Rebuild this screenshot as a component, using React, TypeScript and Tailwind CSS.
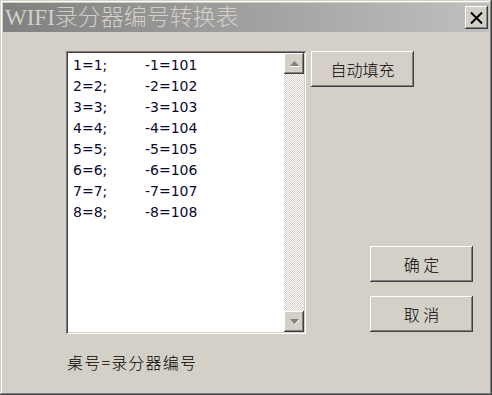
import React from 'react';

const pairs = [1, 2, 3, 4, 5, 6, 7, 8];

// classic raised 3D border for buttons
const raised =
  'shadow-[inset_-1px_-1px_0_#404040,inset_1px_1px_0_#ffffff,inset_-2px_-2px_0_#808080,inset_2px_2px_0_#d4d0c8]';

const cjk = "font-['Noto_Sans_CJK_SC',sans-serif]";

const Btn: React.FC<{ label: string; className?: string }> = ({ label, className = '' }) => (
  <button
    className={`w-[103px] h-[36px] bg-[#d4d0c8] ${raised} ${cjk} font-light text-[16px] text-black flex items-center justify-center ${className}`}
  >
    {label}
  </button>
);

const ArrowBtn: React.FC<{ up?: boolean }> = ({ up }) => (
  <div className={`w-[20px] h-[21px] bg-[#d4d0c8] ${raised} flex items-center justify-center`}>
    <svg width="11" height="7" viewBox="0 0 11 7">
      {up ? (
        <>
          <polygon points="1,6 10,6 5.5,1" fill="#808080" />
          <line x1="1.5" y1="6.5" x2="10.5" y2="6.5" stroke="#ffffff" strokeWidth="1" />
        </>
      ) : (
        <>
          <polygon points="1,1 10,1 5.5,6" fill="#808080" />
          <line x1="6" y1="6.5" x2="10.5" y2="1.5" stroke="#ffffff" strokeWidth="1" />
        </>
      )}
    </svg>
  </div>
);

const App: React.FC = () => {
  return (
    <div className="w-[492px] h-[395px] bg-[#d4d0c8] p-[3px] flex flex-col shadow-[inset_-1px_-1px_0_#404040,inset_1px_1px_0_#d4d0c8,inset_-2px_-2px_0_#808080,inset_2px_2px_0_#ffffff]">
      {/* Title bar */}
      <div className="h-[29px] flex items-center justify-between bg-[linear-gradient(to_right,#808080,#c0c0c0)] pl-[2px] pr-[1px]">
        <span className="text-[23px] leading-none text-[#d4d0c8] font-['Liberation_Serif','Noto_Sans_CJK_SC',serif] font-light">
          WIFI录分器编号转换表
        </span>
        <button className={`w-[23px] h-[23px] bg-[#d4d0c8] ${raised} flex items-center justify-center`}>
          <svg width="13" height="12" viewBox="0 0 13 12">
            <path d="M1 0.5 L12 11.5 M12 0.5 L1 11.5" stroke="#000" strokeWidth="2" />
          </svg>
        </button>
      </div>

      {/* Body */}
      <div className="flex pl-[63px] pt-[19px]">
        {/* List box */}
        <div className="w-[240px] h-[283px] flex p-[2px] bg-white shadow-[inset_1px_1px_0_#808080,inset_-1px_-1px_0_#ffffff,inset_2px_2px_0_#404040,inset_-2px_-2px_0_#d4d0c8]">
          <div className="flex-1 pl-[5px] pt-[2px] font-['DejaVu_Sans',sans-serif] text-[14px] leading-[21px] text-[#0a0a30]">
            {pairs.map((n) => (
              <div key={n} className="flex">
                <span className="w-[72px]">{`${n}=${n};`}</span>
                <span>{`-${n}=${100 + n}`}</span>
              </div>
            ))}
          </div>
          <div className="w-[20px] flex flex-col">
            <ArrowBtn up />
            <div className="flex-1 bg-[repeating-conic-gradient(#d4d0c8_0%_25%,#ffffff_0%_50%)] bg-[length:2px_2px]" />
            <ArrowBtn />
          </div>
        </div>

        {/* Buttons */}
        <div className="flex flex-col ml-[5px]">
          <Btn label="自动填充" />
          <Btn label="确 定" className="ml-[59px] mt-[159px]" />
          <Btn label="取 消" className="ml-[59px] mt-[14px]" />
        </div>
      </div>

      <div className={`pl-[64px] mt-[17px] ${cjk} font-light text-[16px] tracking-[1.2px] leading-[22px] text-black`}>
        桌号=录分器编号
      </div>
    </div>
  );
};

export default App;
